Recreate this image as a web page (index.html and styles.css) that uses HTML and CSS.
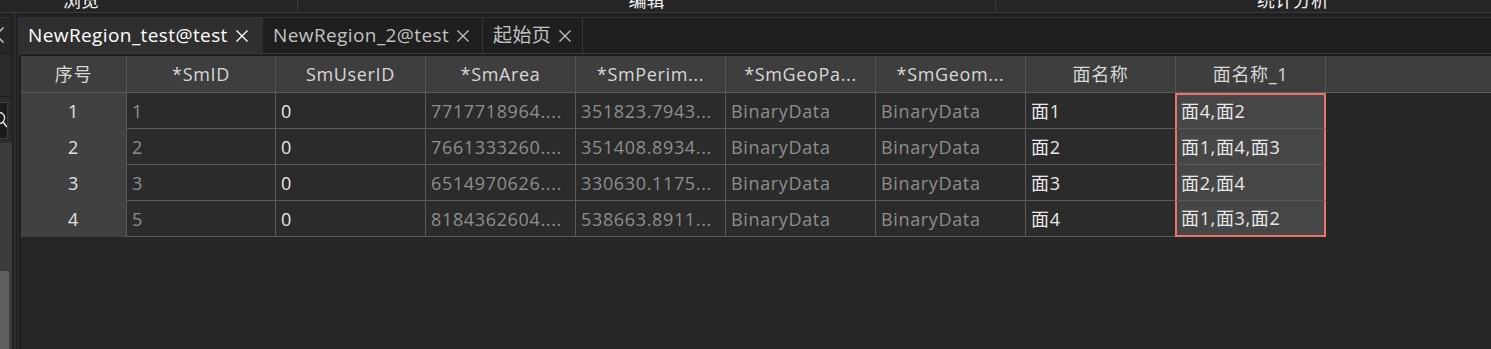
FILE: index.html
```html
<!DOCTYPE html>
<html lang="zh">
<head>
<meta charset="utf-8">
<title>属性表</title>
<link rel="stylesheet" href="styles.css">
</head>
<body>
<div class="top">
  <div class="sec sec1">浏览</div>
  <div class="sec sec2">编辑</div>
  <div class="sec sec3">统计分析</div>
</div>
<div class="main">
  <div class="side">
    <div class="s-top"></div>
    <div class="s-title">
      <svg class="s-close" width="12" height="36" viewBox="0 0 12 36"><path d="M-11.5 10.5 L3.5 25.5 M3.5 10.5 L-11.5 25.5" stroke="#d0d0d0" stroke-width="1.3" fill="none"/></svg>
    </div>
    <div class="s-tool"></div>
    <div class="s-search">
      <div class="s-box">
        <svg width="7" height="35" viewBox="0 0 7 35"><circle cx="-1" cy="15" r="5.6" stroke="#e0e0e0" stroke-width="1.4" fill="none"/><path d="M3 19 L7 24" stroke="#e0e0e0" stroke-width="1.6"/></svg>
      </div>
    </div>
    <div class="s-list"><div class="s-thumb"></div></div>
  </div>
  <div class="split"></div>
  <div class="content">
    <div class="c-top"></div>
    <div class="tabs">
      <div class="tab tab1 active"><span class="t-label">NewRegion_test@test</span><svg class="t-x" width="12" height="12" viewBox="0 0 12 12"><path d="M0.5 0.5 L11.5 11.5 M11.5 0.5 L0.5 11.5" stroke="currentColor" stroke-width="1.3"/></svg></div>
      <div class="tab tab2"><span class="t-label">NewRegion_2@test</span><svg class="t-x" width="12" height="12" viewBox="0 0 12 12"><path d="M0.5 0.5 L11.5 11.5 M11.5 0.5 L0.5 11.5" stroke="currentColor" stroke-width="1.3"/></svg></div>
      <div class="tab tab3"><span class="t-label">起始页</span><svg class="t-x" width="12" height="12" viewBox="0 0 12 12"><path d="M0.5 0.5 L11.5 11.5 M11.5 0.5 L0.5 11.5" stroke="currentColor" stroke-width="1.3"/></svg></div>
    </div>
    <div class="c-gap"></div>
    <div class="grid">
      <div class="row head">
        <div class="c idx">序号</div>
        <div class="c w149">*SmID</div>
        <div class="c">SmUserID</div>
        <div class="c">*SmArea</div>
        <div class="c">*SmPerim...</div>
        <div class="c">*SmGeoPa...</div>
        <div class="c">*SmGeom...</div>
        <div class="c">面名称</div>
        <div class="c">面名称_1</div>
        <div class="c fill"></div>
      </div>
      <div class="row">
        <div class="c idx">1</div>
        <div class="c w149 dim">1</div>
        <div class="c">0</div>
        <div class="c dim">7717718964....</div>
        <div class="c dim">351823.7943...</div>
        <div class="c dim">BinaryData</div>
        <div class="c dim">BinaryData</div>
        <div class="c">面1</div>
        <div class="c sel first">面4,面2</div>
      </div>
      <div class="row">
        <div class="c idx">2</div>
        <div class="c w149 dim">2</div>
        <div class="c">0</div>
        <div class="c dim">7661333260....</div>
        <div class="c dim">351408.8934...</div>
        <div class="c dim">BinaryData</div>
        <div class="c dim">BinaryData</div>
        <div class="c">面2</div>
        <div class="c sel">面1,面4,面3</div>
      </div>
      <div class="row">
        <div class="c idx">3</div>
        <div class="c w149 dim">3</div>
        <div class="c">0</div>
        <div class="c dim">6514970626....</div>
        <div class="c dim">330630.1175...</div>
        <div class="c dim">BinaryData</div>
        <div class="c dim">BinaryData</div>
        <div class="c">面3</div>
        <div class="c sel">面2,面4</div>
      </div>
      <div class="row">
        <div class="c idx">4</div>
        <div class="c w149 dim">5</div>
        <div class="c">0</div>
        <div class="c dim">8184362604....</div>
        <div class="c dim">538663.8911...</div>
        <div class="c dim">BinaryData</div>
        <div class="c dim">BinaryData</div>
        <div class="c">面4</div>
        <div class="c sel last">面1,面3,面2</div>
      </div>
    </div>
  </div>
</div>
</body>
</html>
```

FILE: styles.css
```css
* { box-sizing: border-box; margin: 0; padding: 0; }
html, body { width: 1491px; height: 349px; overflow: hidden; background: #262626; }
body {
  font-family: "Open Sans", "Noto Sans CJK SC", sans-serif;
  font-size: 18px;
  color: #e6e6e6;
}

/* top strip (menu captions, cut off by the window edge as in the capture) */
.top {
  height: 13px;
  display: flex;
  overflow: hidden;
  background: #252525;
  border-bottom: 1px solid #3a3a3a;
}
.sec {
  height: 26px;
  margin-top: -14px;
  line-height: 26px;
  color: #f2f2f2;
  font-family: "Noto Sans CJK SC", sans-serif;
  white-space: nowrap;
}
.sec1 { width: 297px; padding-left: 63px; }
.sec2 { width: 699px; text-align: center; border-left: 1px solid #3a3a3a; border-right: 1px solid #3a3a3a; }
.sec3 { flex: 1; padding-left: 261px; }

.main { display: flex; height: 336px; }

/* left docked panel, mostly off-screen */
.side { width: 12px; display: flex; flex-direction: column; overflow: hidden; }
.s-top { height: 4px; background: #222222; }
.s-title { height: 36px; background: #262626; border-top: 1px solid #333333; }
.s-close { display: block; margin-top: -1px; }
.s-tool { height: 44px; background: #2a2a2a; border-top: 1px solid #1c1c1c; border-bottom: 1px solid #1c1c1c; }
.s-search { height: 46px; background: #2b2b2b; padding-top: 5px; }
.s-box {
  width: 8px; height: 37px;
  background: #1b1b1b;
  border: 1px solid #3c3c3c; border-left: none;
  overflow: hidden;
}
.s-box svg { display: block; }
.s-list { flex: 1; background: #3c3c3c; padding-top: 128px; display: flex; }
.s-thumb { width: 9px; background: #5f5f5f; }

.split {
  width: 7px;
  background: linear-gradient(to right, #1c1c1c 0 1px, #2b2b2b 1px 4px, #1e1e1e 4px 5px, #2a2a2a 5px 7px);
}

.content { flex: 1; display: flex; flex-direction: column; min-width: 0; }
.c-top { height: 4px; background: #202020; border-bottom: 1px solid #333333; box-sizing: content-box; }

/* document tabs */
.tabs {
  height: 36px;
  display: flex;
  background: #1f1f1f;
  border-bottom: 1px solid #3c3c3c;
}
.tab {
  display: flex;
  align-items: center;
  gap: 8px;
  font-size: 19px;
  letter-spacing: 0.4px;
  color: #c2c2c2;
  white-space: nowrap;
  border-right: 1px solid #383838;
}
.tab.active { background: #2f2f2f; color: #ffffff; border-right-color: #2f2f2f; }
.tab1 { width: 244px; padding-left: 9px; }
.tab2 { width: 220px; padding-left: 10px; }
.tab3 { width: 100px; padding-left: 10px; }
.t-label { line-height: 35px; }
.t-x { flex: none; }

.c-gap { height: 2px; background: #1e1e1e; }

/* attribute grid */
.grid { flex: 1; border-left: 2px solid #1f1f1f; letter-spacing: 0.65px; }
.row { display: flex; height: 36px; }
.row.head { height: 37px; background: #3e3e3e; border-bottom: 1px solid #5c5c5c; }
.c {
  flex: none;
  width: 150px;
  height: 100%;
  border-right: 1px solid #5a5a5a;
  border-bottom: 1px solid #5a5a5a;
  padding: 1px 0 0 5px;
  line-height: 34px;
  white-space: nowrap;
  overflow: hidden;
  background: #2b2b2b;
  color: #e8e8e8;
}
.c.w149 { width: 149px; }
.c.dim { color: #8e8e8e; }
.c.idx {
  width: 106px;
  padding-left: 0;
  text-align: center;
  background: #414141;
  border-bottom: none;
  color: #e2e2e2;
}
.head .c {
  background: transparent;
  border-bottom: none;
  border-right-color: #555555;
  padding-left: 0;
  text-align: center;
  color: #d8d8d8;
}
.head .c.fill { flex: 1; border-right: none; }
.c.sel {
  width: 151px;
  margin-left: -1px;
  background: #464646;
  border-left: 2px solid #e8736a;
  border-right: 2px solid #e8736a;
  padding-left: 4px;
}
.c.sel.first { border-top: 2px solid #e8736a; padding-top: 0; line-height: 33px; }
.c.sel.last { border-bottom: 2px solid #e8736a; line-height: 33px; }
```
